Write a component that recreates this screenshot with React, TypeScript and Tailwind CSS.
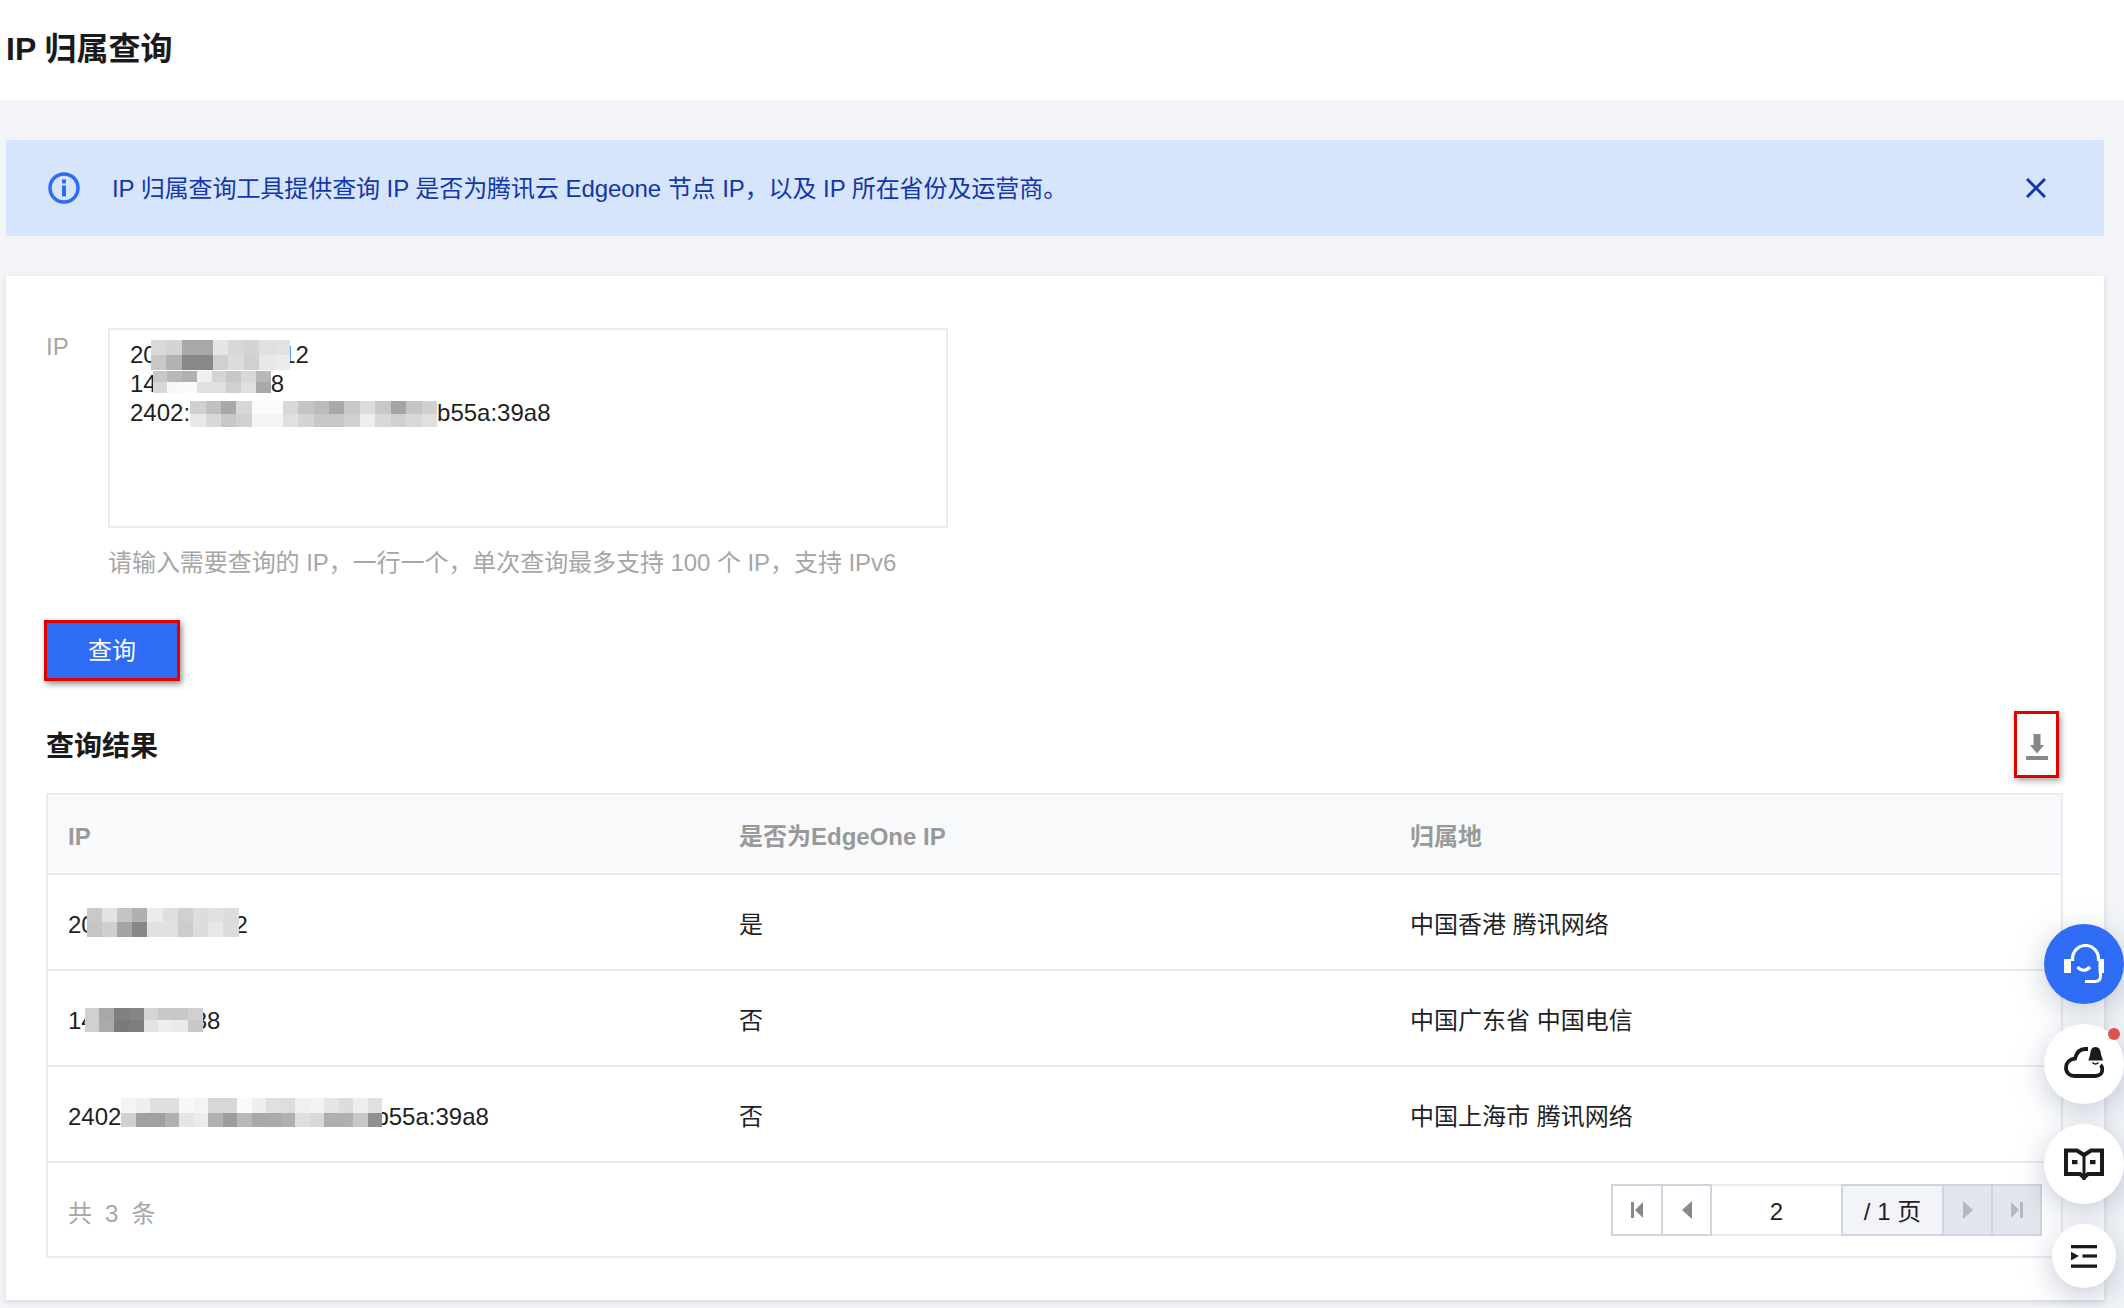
import React from "react";

const FONT = '"Liberation Sans", "Noto Sans CJK SC", sans-serif';

function Mosaic({ rows, cell = 15, h, className = "" }: { rows: string[][]; cell?: number; h: number; className?: string }) {
  return (
    <div className={"relative z-10 flex shrink-0 flex-col " + className}>
      {rows.map((r, i) => (
        <div key={i} className="flex">
          {r.map((c, j) => (
            <div key={j} style={{ width: cell, height: h, backgroundColor: "#" + c + c + c }} />
          ))}
        </div>
      ))}
    </div>
  );
}

function Line({ children }: { children: React.ReactNode }) {
  return <div className="flex h-[29px] items-center">{children}</div>;
}

function PagerIcon({ kind, dim }: { kind: "first" | "prev" | "next" | "last"; dim?: boolean }) {
  const fill = dim ? "#b4b8bf" : "#888888";
  return (
    <svg width="14" height="18" viewBox="0 0 14 18" fill={fill}>
      {kind === "first" && (<><rect x="1" y="1" width="3" height="16" /><path d="M13 1V17L5 9Z" /></>)}
      {kind === "prev" && <path d="M12 0V18L2 9Z" />}
      {kind === "next" && <path d="M2 0V18L12 9Z" />}
      {kind === "last" && (<><rect x="10" y="1" width="3" height="16" /><path d="M1 1V17L9 9Z" /></>)}
    </svg>
  );
}

function Cell({ children }: { children: React.ReactNode }) {
  return <div className="flex items-center pl-5 pt-[4px]">{children}</div>;
}

function Row({ ip, edge, loc }: { ip: React.ReactNode; edge: string; loc: string }) {
  return (
    <div className="grid h-[96px] grid-cols-3 border-b-2 border-[#e9ebf0] text-[#1f1f1f]">
      <Cell>{ip}</Cell>
      <Cell>{edge}</Cell>
      <Cell>{loc}</Cell>
    </div>
  );
}

export default function App() {
  return (
    <div className="relative h-[1308px] w-[2124px] overflow-hidden bg-[#f2f4f8] text-[24px] leading-[29px]" style={{ fontFamily: FONT }}>
      <header className="flex h-[100px] items-center bg-white pl-[6px] pb-[2px]">
        <h1 className="text-[32px] font-bold leading-none text-[#1a1a1a]">IP 归属查询</h1>
      </header>

      <div className="ml-[6px] mr-[20px] mt-[40px] flex h-[96px] items-center bg-[#d6e4fc] pl-[42px] pr-[58px]">
        <svg width="32" height="32" viewBox="0 0 32 32" className="shrink-0">
          <circle cx="16" cy="16" r="14" fill="none" stroke="#2e6cf6" strokeWidth="3.5" />
          <rect x="14" y="7.5" width="4" height="4" fill="#2e6cf6" />
          <rect x="14" y="13.5" width="4" height="11" fill="#2e6cf6" />
        </svg>
        <p className="ml-[32px] flex-1 tracking-[-0.07px] text-[#1237a8]">IP 归属查询工具提供查询 IP 是否为腾讯云 Edgeone 节点 IP，以及 IP 所在省份及运营商。</p>
        <svg width="20" height="20" viewBox="0 0 20 20" stroke="#1237a8" strokeWidth="3" fill="none">
          <path d="M1 1L19 19M19 1L1 19" />
        </svg>
      </div>

      <main className="ml-[6px] mr-[20px] mt-[40px] h-[1024px] bg-white pl-[40px] pr-[41px] pt-[52px] shadow-[0_2px_6px_rgba(0,0,0,0.12)]">
        <div className="flex">
          <label className="w-[62px] pt-[4px] text-[#a6a6a6]">IP</label>
          <div>
            <div className="h-[200px] w-[840px] border-2 border-[#e9ebf0] pl-[20px] pt-[10px] text-[#1f1f1f]">
              <Line>
                <span>20</span>
                <Mosaic className="-ml-[6px] -mr-[8px]" cell={15.5} h={15} rows={[
                  ["d9", "d4", "a8", "a8", "e6", "d8", "d4", "e0", "e2"],
                  ["c8", "b2", "88", "88", "d0", "dc", "d0", "e8", "ec"],
                ]} />
                <span>12</span>
              </Line>
              <Line>
                <span>14</span>
                <Mosaic className="-ml-[4px] -mt-[3px]" cell={14.75} h={11} rows={[
                  ["c8", "b8", "b0", "f0", "d4", "c8", "d8", "b8"],
                  ["d8", "f8", "fa", "e0", "e0", "d0", "e0", "a8"],
                ]} />
                <span>8</span>
              </Line>
              <Line>
                <span>2402:</span>
                <Mosaic className="mt-[2px]" cell={15.45} h={13} rows={[
                  ["d0", "c0", "a8", "d8", "fc", "fc", "d8", "c4", "bc", "a8", "c8", "dc", "c8", "a4", "c4", "d0"],
                  ["e8", "d8", "c8", "d0", "f4", "f4", "e0", "d4", "c8", "c8", "d0", "ee", "d8", "d0", "d8", "e0"],
                ]} />
                <span>b55a:39a8</span>
              </Line>
            </div>
            <p className="mt-[20px] h-[30px] leading-[30px] tracking-[-0.06px] text-[#a6a6a6]">请输入需要查询的 IP，一行一个，单次查询最多支持 100 个 IP，支持 IPv6</p>
          </div>
        </div>

        <button className="-ml-[2px] mt-[42px] flex h-[61px] w-[136px] items-center justify-center border-[3px] border-[#e00000] bg-[#2e6cf6] text-white shadow-[2px_3px_6px_rgba(0,0,0,0.45)]">
          查询
        </button>

        <div className="mt-[30px] flex items-center justify-between pr-[4px]">
          <h2 className="pt-[3px] text-[28px] font-bold text-[#1a1a1a]">查询结果</h2>
          <div className="flex h-[67px] w-[45px] items-center justify-center border-[3px] border-[#e00000] pt-[5px] shadow-[2px_3px_6px_rgba(0,0,0,0.35)]">
            <svg width="22" height="26" viewBox="0 0 22 26" fill="#888888">
              <rect x="7.5" y="0" width="7" height="11" />
              <path d="M4 11H18L11 19.5Z" />
              <rect x="0" y="22" width="22" height="4" />
            </svg>
          </div>
        </div>

        <div className="mt-[15px] h-[465px] border-2 border-[#e9ebf0]">
          <div className="grid h-[80px] grid-cols-3 border-b-2 border-[#e9ebf0] bg-[#f8f9fb] font-bold text-[#999999]">
            <Cell>IP</Cell>
            <Cell>是否为EdgeOne IP</Cell>
            <Cell>归属地</Cell>
          </div>
          <Row
            edge="是"
            loc="中国香港 腾讯网络"
            ip={
              <div className="flex items-center">
                <span>20</span>
                <Mosaic className="-ml-[8px] -mr-[4px] -mt-[4px]" cell={15.2} h={14.5} rows={[
                  ["c9", "e3", "c4", "b0", "ec", "df", "d0", "dd", "e0", "dc"],
                  ["c5", "cf", "a4", "87", "e1", "e1", "cc", "dd", "e8", "dc"],
                ]} />
                <span>2</span>
              </div>
            }
          />
          <Row
            edge="否"
            loc="中国广东省 中国电信"
            ip={
              <div className="flex items-center">
                <span>14</span>
                <Mosaic className="-ml-[10px] -mr-[9px]" cell={14.75} h={12} rows={[
                  ["d0", "a8", "80", "85", "d5", "c8", "c8", "d0"],
                  ["d0", "ab", "7a", "7e", "e3", "ee", "ea", "c8"],
                ]} />
                <span>88</span>
              </div>
            }
          />
          <Row
            edge="否"
            loc="中国上海市 腾讯网络"
            ip={
              <div className="flex items-center">
                <span>2402</span>
                <Mosaic className="-mr-[7px] -mt-[7px]" cell={14.5} h={14.5} rows={[
                  ["f4", "ef", "df", "df", "f8", "f4", "d7", "d7", "fa", "ef", "e0", "dd", "f0", "f3", "e5", "dd", "ee", "e0"],
                  ["d0", "a0", "a0", "b0", "e5", "ec", "b0", "9c", "b8", "a8", "aa", "b0", "df", "d8", "ae", "b0", "c8", "90"],
                ]} />
                <span>b55a:39a8</span>
              </div>
            }
          />
          <div className="flex h-[93px] items-center justify-between pl-5 pr-[19px]">
            <span className="pt-[7px] tracking-[0.2px] text-[#a6a6a6] [word-spacing:6px]">共 3 条</span>
            <div className="flex h-[52px] text-[#1f1f1f]">
              <div className="flex w-[52px] items-center justify-center border-2 border-[#cfd5e0]"><PagerIcon kind="first" /></div>
              <div className="-ml-[2px] flex w-[51px] items-center justify-center border-2 border-[#cfd5e0]"><PagerIcon kind="prev" /></div>
              <div className="flex w-[129px] items-center justify-center border-y-2 border-[#e9ebf0] pt-[3px]">2</div>
              <div className="flex w-[101px] items-center justify-center border-2 border-r-0 border-[#cfd5e0] bg-[#f2f4f8] pt-[3px]">/ 1 页</div>
              <div className="flex w-[51px] items-center justify-center border-2 border-[#cfd5e0] bg-[#e3e6ec]"><PagerIcon kind="next" dim /></div>
              <div className="-ml-[2px] flex w-[51px] items-center justify-center border-2 border-[#cfd5e0] bg-[#e3e6ec]"><PagerIcon kind="last" dim /></div>
            </div>
          </div>
        </div>
      </main>

      <div className="absolute left-[2044px] top-[924px] flex h-[80px] w-[80px] items-center justify-center rounded-full bg-[#2e6cf6] shadow-[0_8px_30px_rgba(90,105,140,0.35)]">
        <svg width="40" height="40" viewBox="0 0 40 40" fill="none" stroke="#fff">
          <rect x="0" y="15" width="7" height="14" fill="#fff" stroke="none" />
          <rect x="34.5" y="15" width="5.5" height="14" fill="#fff" stroke="none" />
          <path d="M8.5 17V14.5A13 13 0 0 1 34.5 14.5V17" strokeWidth="3.2" />
          <path d="M13.5 23Q19.5 29.5 26 23" strokeWidth="3.2" />
          <path d="M36.5 28V32Q36.5 37.5 31 37.5H21" strokeWidth="3" />
        </svg>
      </div>

      <div className="absolute left-[2044px] top-[1024px] flex h-[80px] w-[80px] items-center justify-center rounded-full bg-white shadow-[0_8px_30px_rgba(90,105,140,0.35)]">
        <svg width="40" height="40" viewBox="0 0 40 40" fill="none">
          <path d="M24 5H21C15.5 5 12.5 9 11 14.5C5.5 15 2 19 2 24C2 29 6 32 10.5 32H31C35.5 32 38.3 29 38.3 25.5C38.3 23.5 37.8 22 36.5 21" stroke="#1a1a1a" strokeWidth="3.8" />
          <path d="M31.5 3C27.5 3 26.5 6.5 26.2 10.5L24.3 16.5H39L37 10.5C36.7 6.5 35.5 3 31.5 3Z" fill="#1a1a1a" />
          <path d="M28.5 18.5Q31.5 21.5 34.5 18.5" stroke="#1a1a1a" strokeWidth="1.6" />
        </svg>
        <span className="absolute left-[64px] top-[4px] h-[12px] w-[12px] rounded-full bg-[#dc5350]" />
      </div>

      <div className="absolute left-[2044px] top-[1124px] flex h-[80px] w-[80px] items-center justify-center rounded-full bg-white shadow-[0_8px_30px_rgba(90,105,140,0.35)]">
        <svg width="40" height="40" viewBox="0 0 40 40" fill="none" stroke="#1a1a1a">
          <path d="M2 6.5H13L20 11L27 6.5H38V30H24L20 33.5L16 30H2Z" strokeWidth="4" />
          <path d="M20 11V36" strokeWidth="3" />
          <rect x="8" y="16" width="5.5" height="4.2" fill="#1a1a1a" stroke="none" />
          <rect x="26" y="16" width="5.5" height="4.2" fill="#1a1a1a" stroke="none" />
        </svg>
      </div>

      <div className="absolute left-[2052px] top-[1224px] flex h-[64px] w-[64px] items-center justify-center rounded-full bg-white shadow-[0_8px_30px_rgba(90,105,140,0.35)]">
        <svg width="26" height="23" viewBox="0 0 26 23" fill="#1a1a1a">
          <rect x="0" y="0" width="26" height="3.3" />
          <rect x="11.5" y="9.4" width="14.5" height="3.2" />
          <path d="M0 6.8L8 11L0 15.5Z" />
          <rect x="0" y="19.5" width="26" height="3.3" />
        </svg>
      </div>
    </div>
  );
}
